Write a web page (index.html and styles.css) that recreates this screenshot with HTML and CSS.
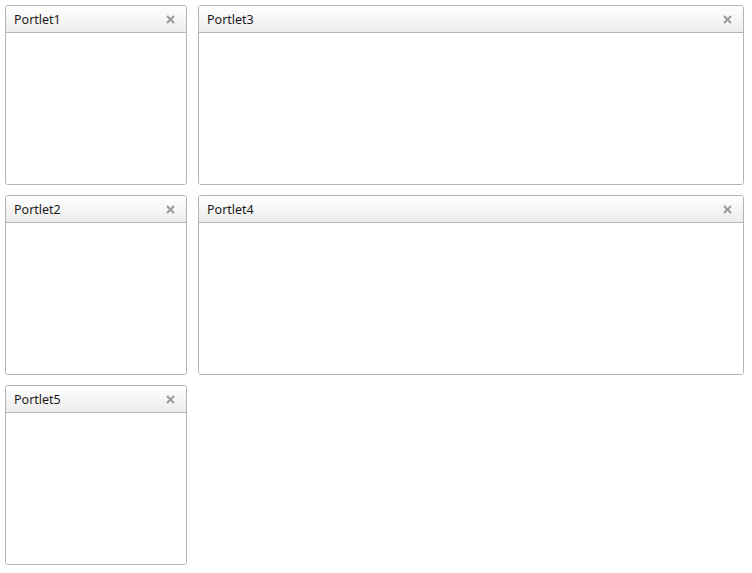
FILE: index.html
```html
<!DOCTYPE html>
<html>
<head>
<meta charset="utf-8">
<link rel="stylesheet" href="styles.css">
</head>
<body>
<div class="board">
  <div class="col col-narrow">
    <div class="portlet"><div class="ph"><span class="pt">Portlet1</span><svg class="px" viewBox="0 0 9 9"><path d="M1 1L8 8M8 1L1 8"/></svg></div><div class="pb"></div></div>
    <div class="portlet"><div class="ph"><span class="pt">Portlet2</span><svg class="px" viewBox="0 0 9 9"><path d="M1 1L8 8M8 1L1 8"/></svg></div><div class="pb"></div></div>
    <div class="portlet"><div class="ph"><span class="pt">Portlet5</span><svg class="px" viewBox="0 0 9 9"><path d="M1 1L8 8M8 1L1 8"/></svg></div><div class="pb"></div></div>
  </div>
  <div class="col col-wide">
    <div class="portlet"><div class="ph"><span class="pt">Portlet3</span><svg class="px" viewBox="0 0 9 9"><path d="M1 1L8 8M8 1L1 8"/></svg></div><div class="pb"></div></div>
    <div class="portlet"><div class="ph"><span class="pt">Portlet4</span><svg class="px" viewBox="0 0 9 9"><path d="M1 1L8 8M8 1L1 8"/></svg></div><div class="pb"></div></div>
  </div>
</div>
</body>
</html>
```
FILE: styles.css
```css
html, body { margin: 0; padding: 0; background: #fff; }
body { font-family: "Noto Sans", "Liberation Sans", sans-serif; }
.board { display: flex; gap: 11px; padding: 5px 0 0 5px; align-items: flex-start; }
.col { display: flex; flex-direction: column; gap: 10px; }
.col-narrow { width: 182px; }
.col-wide { width: 546px; }
.portlet {
  height: 180px; box-sizing: border-box;
  border: 1px solid #b4b4b4; border-radius: 3px;
  display: flex; flex-direction: column; overflow: hidden;
}
.ph {
  height: 26px; flex: none;
  border-bottom: 1px solid #b4b4b4;
  background: linear-gradient(#ffffff, #ececec);
  display: flex; align-items: center; justify-content: space-between;
  padding: 0 11px 0 8px;
}
.pt { font-size: 12.5px; color: #1a1a1a; }
.px { width: 9px; height: 9px; fill: none; stroke: #9a9a9a; stroke-width: 2; }
.pb { flex: 1; background: #fff; }
```
